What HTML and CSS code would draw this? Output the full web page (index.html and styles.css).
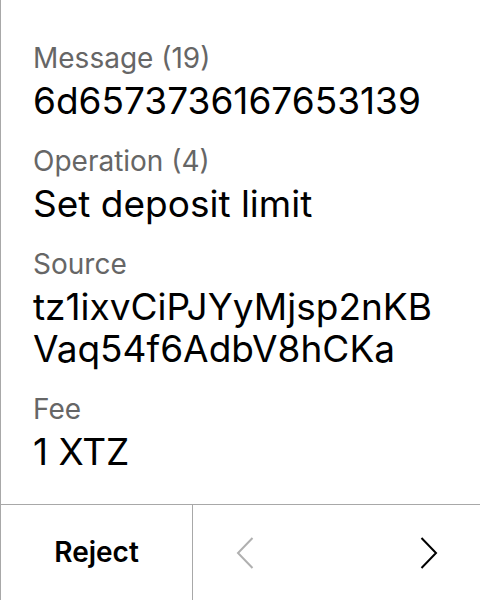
FILE: index.html
```html
<!DOCTYPE html>
<html>
<head>
<meta charset="utf-8">
<link rel="stylesheet" href="styles.css">
</head>
<body>
<div class="screen">
  <div class="content">
    <div class="field">
      <div class="label">Message (19)</div>
      <div class="value">6d6573736167653139</div>
    </div>
    <div class="field">
      <div class="label">Operation (4)</div>
      <div class="value">Set deposit limit</div>
    </div>
    <div class="field">
      <div class="label">Source</div>
      <div class="value">tz1ixvCiPJYyMjsp2nKB<br>Vaq54f6AdbV8hCKa</div>
    </div>
    <div class="field">
      <div class="label">Fee</div>
      <div class="value">1 XTZ</div>
    </div>
  </div>
  <div class="footer">
    <div class="reject">Reject</div>
    <div class="nav">
      <svg class="chev prev" width="18" height="32" viewBox="0 0 18 32"><path d="M16.5 1 L2 16 L16.5 31" fill="none" stroke="#b0b0b0" stroke-width="2"/></svg>
      <svg class="chev next" width="18" height="32" viewBox="0 0 18 32"><path d="M1.5 1 L16 16 L1.5 31" fill="none" stroke="#000" stroke-width="2"/></svg>
    </div>
  </div>
</div>
</body>
</html>
```
FILE: styles.css
```css
* { box-sizing: border-box; }
html, body { margin: 0; padding: 0; background: #fff; }
body { font-family: Inter, "Noto Sans", sans-serif; }
.screen {
  width: 480px;
  height: 600px;
  border-left: 1px solid #a8a8a8;
  display: flex;
  flex-direction: column;
}
.content {
  flex: 1;
  padding: 41px 0 0 32px;
  display: flex;
  flex-direction: column;
  gap: 22px;
}
.field {
  display: flex;
  flex-direction: column;
  gap: 5px;
}
.label {
  font-size: 28px;
  line-height: 34px;
  color: #666;
}
.value {
  font-size: 37px;
  line-height: 42px;
  color: #000;
}
.footer {
  height: 96px;
  border-top: 1px solid #a8a8a8;
  display: flex;
}
.reject {
  width: 192px;
  border-right: 1px solid #a8a8a8;
  display: flex;
  align-items: center;
  justify-content: center;
  font-size: 28px;
  font-weight: 600;
  padding-bottom: 2px;
}
.nav {
  flex: 1;
  display: flex;
  align-items: center;
  justify-content: space-between;
  padding: 0 42px 0 43px;
}
```
